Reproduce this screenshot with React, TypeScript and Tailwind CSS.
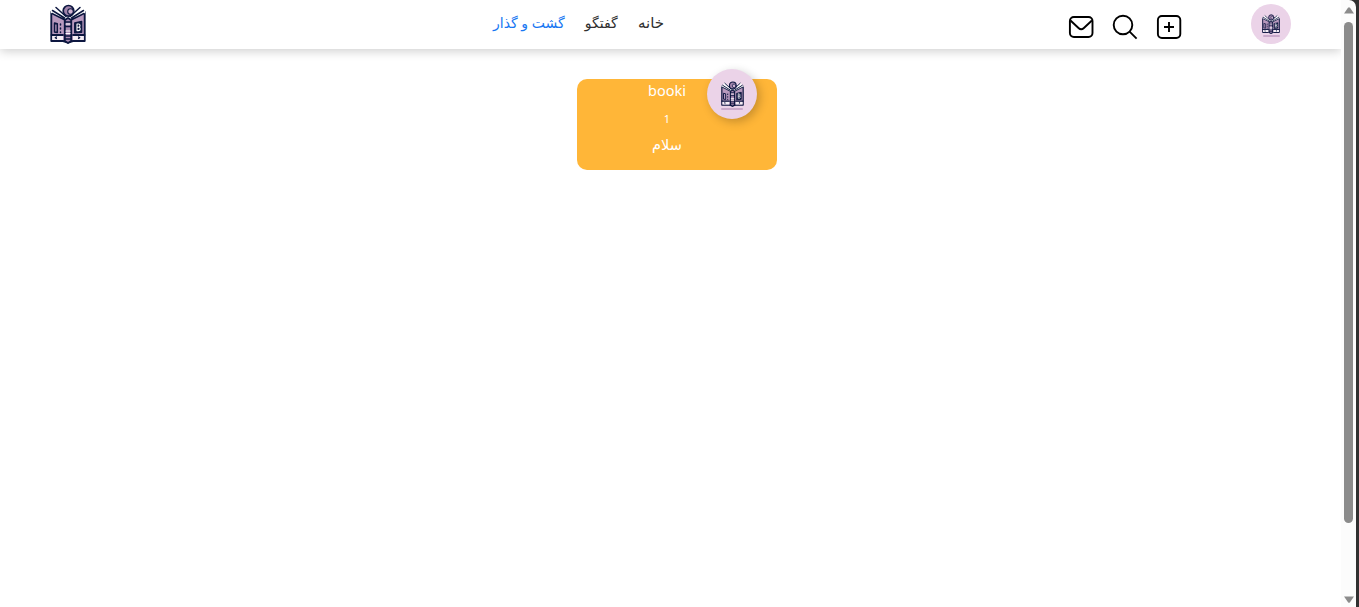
import React from "react";

function BookLogo({ className }: { className: string }) {
  return (
    <svg viewBox="0 0 36 40" className={className} preserveAspectRatio="none" fill="none" stroke="#0d1740" strokeLinecap="round" strokeLinejoin="round">
      <path d="M1.300 8V37H13l5 1.500 5-1.500h11.700V8L22 14l-4 2-4-2z" fill="#b899be" strokeWidth="1.900" />
      <path d="M2.200 32H13V36H2.200zM23 32h10.800V36H23z" fill="#f5eef5" stroke="none" />
      <path d="M1.500 31h11.500M23 31h11.500" strokeWidth="1.800" />
      <path d="M2.500 8l13 6.500M5.500 5l10 8.500M33.500 8l-13 6.500M30.500 5l-10 8.500" stroke="#fff" strokeWidth="3.600" />
      <path d="M2 9.500L15 16M2.500 6.500l12 7.500M6 3.500l10 9M34 9.500L21 16M33.500 6.500L21.500 14M30 3.500l-10 9" strokeWidth="1.500" />
      <circle cx="18.500" cy="6.800" r="5.300" fill="#a084ab" strokeWidth="1.700" />
      <circle cx="20.500" cy="7.500" r="2.800" fill="#d3b4d3" strokeWidth="1.100" />
      <path d="M14.800 16l3.200-2 3.200 2v21l-3.200 2-3.200-2z" fill="#a98bb3" strokeWidth="1.900" />
      <path d="M16 20h4M16 27h4M16 29.500h4" stroke="#fff" strokeWidth="1.200" />
      <path d="M15 18h6M15 22.500h6M15 32h6M15 35h6" strokeWidth="1.300" />
      <path d="M4.500 19l2.800.7v8.800l-2.800-.5zM10.500 20v1M10.500 24v1M10.500 28v.5" strokeWidth="1.500" />
      <path d="M24.700 19l7-1.700v11l-7 .5z" fill="#0d1740" strokeWidth="1.300" />
      <path d="M27 20v6.600h1.500q1.700 0 1.700-1.700 0-1.400-1.200-1.600 1-.4 1-1.700 0-1.600-1.400-1.600zM27 23.300h2" stroke="#fff" strokeWidth="1.100" />
      <path d="M6.500 32.900l-1.300.8 1.300.8M28.500 32.900l1.300.8-1.300.8" strokeWidth="1.200" />
    </svg>
  );
}

function MailIcon() {
  return (
    <svg viewBox="0 0 26 24" className="h-6 w-[26px]" fill="none" stroke="#000" strokeWidth="1.900">
      <rect x="1.900" y="2" width="22.600" height="20" rx="4" />
      <path d="M2.500 5.500l8 7.500q2.700 2.500 5.400 0l8-7.500" />
    </svg>
  );
}

function SearchIcon() {
  return (
    <svg viewBox="0 0 26 26" className="h-[26px] w-[26px]" fill="none" stroke="#000" strokeWidth="1.900">
      <circle cx="11" cy="11" r="9.300" />
      <path d="M17.600 17.600l7 7" />
    </svg>
  );
}

function AddIcon() {
  return (
    <svg viewBox="0 0 26 26" className="h-[26px] w-[26px]" fill="none" stroke="#000" strokeWidth="1.900">
      <rect x="1.900" y="2" width="22.400" height="22" rx="4" />
      <path d="M13 8v10M8 13h10" />
    </svg>
  );
}

function Header() {
  return (
    <header className="flex h-[49px] shrink-0 items-start bg-white shadow-[0_2px_10px_rgba(0,0,0,0.2)]">
      <BookLogo className="ml-[50px] mt-1 h-10 w-9 shrink-0" />
      <nav dir="rtl" className="ml-[407px] flex h-[45px] w-[171px] shrink-0 items-center justify-between whitespace-nowrap text-[14px] text-[#303030]">
        <a className="text-[15px]">خانه</a>
        <a>گفتگو</a>
        <a className="text-[#1877f2]">گشت و گذار</a>
      </nav>
      <div className="ml-[404px] mt-3.5 flex h-[26px] items-center gap-[18px]">
        <MailIcon />
        <SearchIcon />
        <AddIcon />
      </div>
      <div className="ml-[69px] mt-1 flex size-10 shrink-0 flex-col items-center rounded-full bg-[#ebd3e8] pt-2.5">
        <BookLogo className="h-5 w-[18px]" />
        <div className="mt-px h-0.5 w-[17px] rounded-full bg-[#c9a9cb]" />
      </div>
    </header>
  );
}

function UserCard() {
  return (
    <article className="relative ml-[577px] mt-[30px] h-[91px] w-[200px] rounded-[10px] bg-[#ffb638] text-white">
      <div className="flex w-[180px] flex-col items-center">
        <p className="h-6 text-[14.500px] leading-[23px]">booki</p>
        <p className="h-8 text-[11px] leading-8">1</p>
        <p dir="rtl" className="h-6 text-[14.500px] leading-[19px]">سلام</p>
      </div>
      <div className="absolute -top-2.5 right-5 flex size-[50px] flex-col items-center rounded-full bg-[#ebd3e8] pt-3 shadow-[3px_3px_10px_rgba(0,0,0,0.22)]">
        <BookLogo className="h-[26px] w-[23px]" />
        <div className="mt-px h-0.5 w-[22px] rounded-full bg-[#c9a9cb]" />
      </div>
    </article>
  );
}

function Scrollbar() {
  return (
    <div className="flex w-[18px] shrink-0 bg-[#303030]">
      <div className="flex w-[15px] flex-col items-center rounded-tr-[7px] bg-[#fcfcfc] pt-[7px]">
        <svg viewBox="0 0 10 7" className="h-[7px] w-2.5" fill="#8b8b8b"><path d="M0 6.500L4 .8q1-1.200 2 0l4 5.700z" /></svg>
        <div className="mt-2 h-[501px] w-[9px] rounded-full bg-[#8b8b8b]" />
        <svg viewBox="0 0 10 7" className="mb-1 mt-auto h-[7px] w-2.5" fill="#8b8b8b"><path d="M0 .5l4 5.700q1 1.200 2 0L10 .5z" /></svg>
      </div>
    </div>
  );
}

export default function App() {
  return (
    <div className="flex h-[607px] w-[1359px] overflow-hidden bg-white font-['Noto_Sans','DejaVu_Sans',sans-serif]">
      <main className="flex w-[1341px] flex-col overflow-hidden">
        <Header />
        <UserCard />
      </main>
      <Scrollbar />
    </div>
  );
}
